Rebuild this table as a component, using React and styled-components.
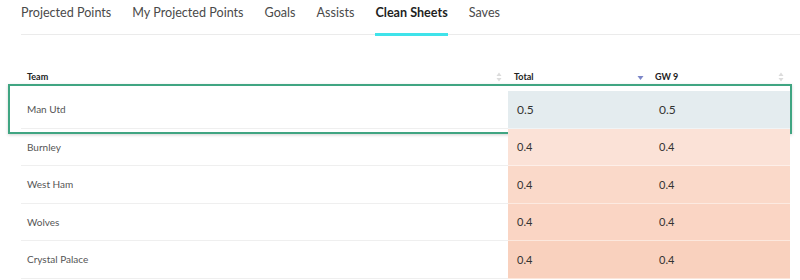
import React from "react";
import styled, { createGlobalStyle, css } from "styled-components";

const GlobalStyle = createGlobalStyle`
  html, body { margin: 0; padding: 0; background: #fff; }
  body { font-family: Lato, "Noto Sans", sans-serif; color: #333; }
`;

const Page = styled.div`
  width: 800px;
  height: 280px;
  overflow: hidden;
  padding-left: 21px;
  box-sizing: border-box;
`;

const Tabs = styled.nav`
  display: flex;
  gap: 21px;
  height: 34px;
  border-bottom: 1px solid #ebebeb;
`;

const Tab = styled.div`
  position: relative;
  padding-top: 4px;
  font-size: 12.6px;
  line-height: 17px;
  color: ${(p) => (p.$active ? "#1f1f1f" : "#4a4a4a")};
  font-weight: ${(p) => (p.$active ? 700 : 400)};
  white-space: nowrap;
  ${(p) =>
    p.$active &&
    css`
      &::after {
        content: "";
        position: absolute;
        left: 0;
        right: 0;
        bottom: -2px;
        height: 3px;
        background: #3fe3ea;
      }
    `}
`;

const Table = styled.div`
  margin-top: 27px;
  width: 769px;
`;

const Row = styled.div`
  position: relative;
  display: grid;
  grid-template-columns: 487px 142px 140px;
  height: ${(p) => (p.$head ? "29px" : "37.5px")};
  ${(p) =>
    p.$highlight &&
    css`
      &::after {
        content: "";
        position: absolute;
        top: -7px;
        bottom: -5px;
        left: -13px;
        right: -2px;
        border: 2px solid #40a582;
        box-shadow: 0 1px 3px rgba(0, 0, 0, 0.18);
        pointer-events: none;
      }
    `}
`;

const HeadCell = styled.div`
  display: flex;
  align-items: center;
  justify-content: space-between;
  padding: 0 6px 0 ${(p) => p.$pad || 6}px;
  font-size: 9px;
  font-weight: 700;
  color: #222;
`;

const TeamCell = styled.div`
  display: flex;
  align-items: center;
  padding-left: 6px;
  font-size: 10px;
  color: #555;
  border-bottom: 1px solid #efefef;
`;

const ValueCell = styled.div`
  display: flex;
  align-items: center;
  padding-left: 9px;
  font-size: ${(p) => (p.$big ? 12 : 11)}px;
  color: #333;
  background: ${(p) => p.$bg};
  border-bottom: 1px solid rgba(255, 255, 255, 0.45);
`;

const SortIcon = ({ active }) =>
  active ? (
    <svg width="7" height="9" viewBox="0 0 7 9">
      <path d="M0.5 4 L6.5 4 L3.5 8 Z" fill="#7c86c8" />
    </svg>
  ) : (
    <svg width="6" height="10" viewBox="0 0 6 10">
      <path d="M3 0.5 L5.5 4 L0.5 4 Z" fill="#dcdcdc" />
      <path d="M3 9.5 L5.5 6 L0.5 6 Z" fill="#dcdcdc" />
    </svg>
  );

const tabs = [
  "Projected Points",
  "My Projected Points",
  "Goals",
  "Assists",
  "Clean Sheets",
  "Saves",
];

const rows = [
  { team: "Man Utd", total: "0.5", gw: "0.5", bg: "#e4ecef", highlight: true },
  { team: "Burnley", total: "0.4", gw: "0.4", bg: "#fbe2d7" },
  { team: "West Ham", total: "0.4", gw: "0.4", bg: "#fad9c9" },
  { team: "Wolves", total: "0.4", gw: "0.4", bg: "#fad5c4" },
  { team: "Crystal Palace", total: "0.4", gw: "0.4", bg: "#f9d1be" },
];

export default function App() {
  return (
    <>
      <GlobalStyle />
      <Page>
        <Tabs>
          {tabs.map((t) => (
            <Tab key={t} $active={t === "Clean Sheets"}>
              {t}
            </Tab>
          ))}
        </Tabs>
        <Table>
          <Row $head>
            <HeadCell>
              Team
              <SortIcon />
            </HeadCell>
            <HeadCell>
              Total
              <SortIcon active />
            </HeadCell>
            <HeadCell $pad={5}>
              GW 9
              <SortIcon />
            </HeadCell>
          </Row>
          {rows.map((r) => (
            <Row key={r.team} $highlight={r.highlight}>
              <TeamCell>{r.team}</TeamCell>
              <ValueCell $bg={r.bg} $big={r.highlight}>
                {r.total}
              </ValueCell>
              <ValueCell $bg={r.bg} $big={r.highlight}>
                {r.gw}
              </ValueCell>
            </Row>
          ))}
        </Table>
      </Page>
    </>
  );
}
